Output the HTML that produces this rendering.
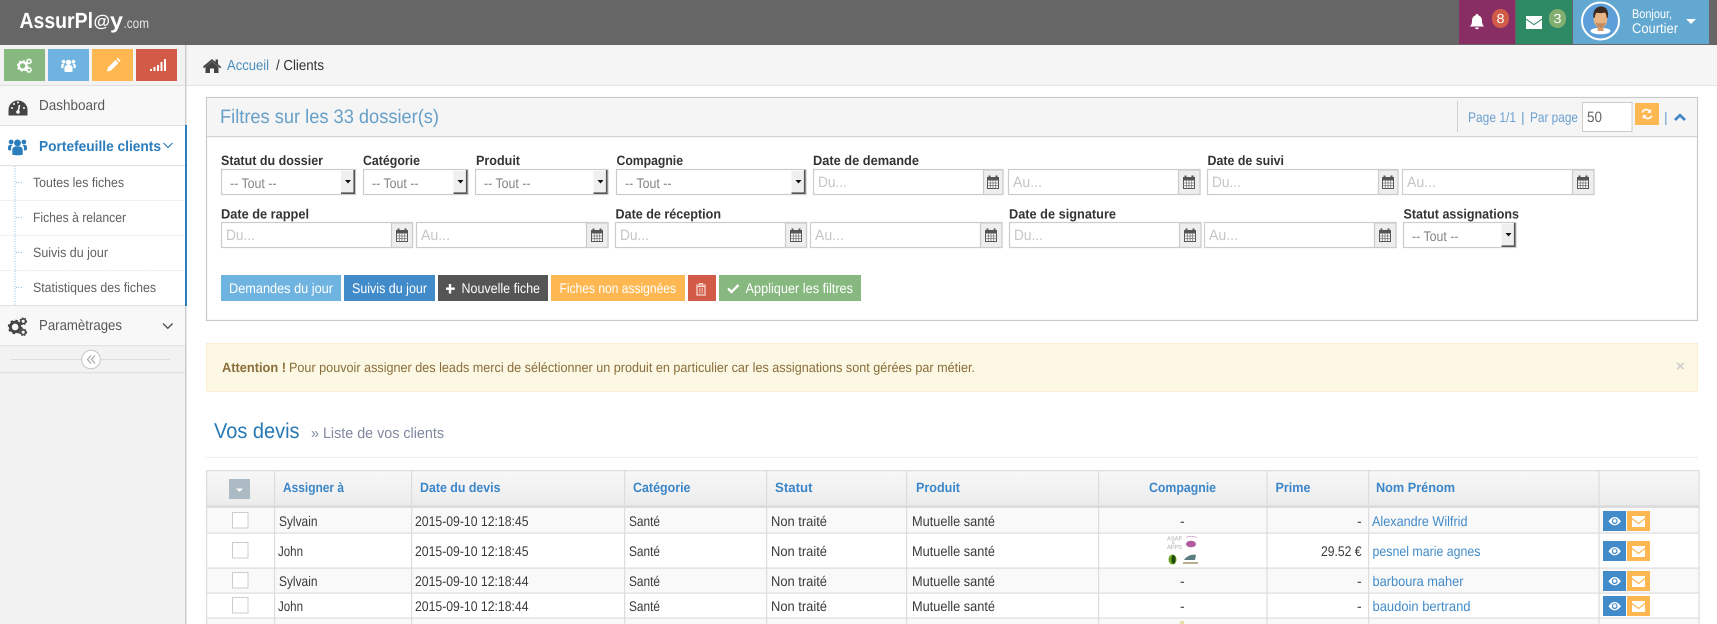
<!DOCTYPE html>
<html lang="fr">
<head>
<meta charset="utf-8">
<title>AssurPlay - Clients</title>
<style>
html,body{margin:0;padding:0;width:1717px;height:624px;overflow:hidden;background:#fff}
svg{display:block}
text{font-family:"Liberation Sans",sans-serif;font-size:14px;fill:#393939;text-rendering:geometricPrecision}
.b{font-weight:bold}
.lab{font-weight:bold;font-size:13.5px;fill:#333}
.th{font-weight:bold;font-size:13.5px;fill:#3b86c8}
.ph{font-size:15px;fill:#c6c6c6}
.sel{font-size:14px;fill:#858585}
.btn{font-size:14px;fill:#fff}
.sub{font-size:13.5px;fill:#616161}
.nav{font-size:14.5px;fill:#585858}
.a{fill:#428bca}
.pg{font-size:14px;fill:#6a9fd0}
</style>
</head>
<body>
<svg width="1717" height="624" viewBox="0 0 1717 624" xmlns="http://www.w3.org/2000/svg">
<defs>
<linearGradient id="thg" x1="0" y1="0" x2="0" y2="1"><stop offset="0" stop-color="#f8f8f8"/><stop offset="1" stop-color="#ececec"/></linearGradient>
<symbol id="cal" viewBox="0 0 12 14" overflow="visible">
<path d="M0.5 2.5h11v11h-11z" fill="#fff" stroke="#555"/>
<path d="M0 2h12v3.5H0z" fill="#555"/>
<path d="M2.5 0.5v3M9.5 0.5v3" stroke="#555" stroke-width="2"/>
<path d="M0.5 8h11M0.5 10.7h11M3.3 5v8M6 5v8M8.7 5v8" stroke="#777" stroke-width=".8"/>
</symbol>
<symbol id="sa" viewBox="0 0 16 25" overflow="visible">
<path d="M1 1h13v22H1z" fill="#efefef"/>
<path d="M14.2 0v23.2H1" fill="none" stroke="#555" stroke-width="1.6"/>
<path d="M5 10h6l-3 3.5z" fill="#111"/>
</symbol>
<symbol id="eye" viewBox="0 0 23 20" overflow="visible">
<path d="M5.500 10.300C8 6.800 10 6 11.700 6s3.700.8 6.200 4.300c-2.500 3.300-4.500 4.100-6.200 4.100S8 13.600 5.500 10.300z" fill="#fff"/>
<circle cx="11.700" cy="10.200" r="2.900" fill="#428bca"/>
<circle cx="11.700" cy="10" r="1.700" fill="#fff"/>
</symbol>
<symbol id="env" viewBox="0 0 23 20" overflow="visible">
<path d="M5 5h13v11H5z" fill="#fff"/>
<path d="M5 7.500l6.500 5 6.500-5" fill="none" stroke="#ffb752" stroke-width="1.200"/>
</symbol>
<symbol id="gear" viewBox="0 0 20 20" overflow="visible">
<circle cx="7.500" cy="10.500" r="5" fill="none" stroke="currentColor" stroke-width="3"/>
<circle cx="7.500" cy="10.500" r="6.600" fill="none" stroke="currentColor" stroke-width="2.200" stroke-dasharray="2.6 2.6"/>
<circle cx="16" cy="4.500" r="2.500" fill="none" stroke="currentColor" stroke-width="1.700"/>
<circle cx="16" cy="4.500" r="3.500" fill="none" stroke="currentColor" stroke-width="1.200" stroke-dasharray="1.5 1.5"/>
<circle cx="16" cy="16" r="2.500" fill="none" stroke="currentColor" stroke-width="1.700"/>
<circle cx="16" cy="16" r="3.500" fill="none" stroke="currentColor" stroke-width="1.200" stroke-dasharray="1.5 1.5"/>
</symbol>
<symbol id="ppl" viewBox="0 0 20 19" overflow="visible">
<circle cx="10" cy="6" r="3.600" fill="currentColor"/>
<circle cx="3.300" cy="5" r="2.500" fill="currentColor"/>
<circle cx="16.700" cy="5" r="2.500" fill="currentColor"/>
<path d="M4.500 18.500v-5c0-2.500 2-3.800 3.500-3.800h4c1.500 0 3.500 1.300 3.500 3.800v5c-3 .8-8 .8-11 0z" fill="currentColor"/>
<path d="M0 13v-2.500C0 9 1 8 2.500 8h2.300C3.500 9 3.200 10.500 3.200 12v2C1.800 13.900 .7 13.500 0 13zM20 13v-2.500C20 9 19 8 17.500 8h-2.300c1.300 1 1.600 2.500 1.600 4v2c1.400-.1 2.500-.5 3.200-1z" fill="currentColor"/>
</symbol>
</defs>

<!-- top bar -->
<rect width="1717" height="45" fill="#666"/>
<text x="19.500" y="28" class="b" style="font-size:22px;fill:#fff" textLength="73.500" lengthAdjust="spacingAndGlyphs">AssurPl</text>
<text x="93.500" y="26.500" class="b" style="font-size:16.500px;fill:#fff" textLength="16.500" lengthAdjust="spacingAndGlyphs">@</text>
<text x="110" y="28" class="b" style="font-size:22px;fill:#fff" textLength="13" lengthAdjust="spacingAndGlyphs">y</text>
<text x="123.500" y="28" style="font-size:14px;fill:#e6e6e6" textLength="25.500" lengthAdjust="spacingAndGlyphs">.com</text>

<rect x="1459" y="0" width="56" height="44" fill="#892e65"/>
<rect x="1516" y="0" width="56" height="44" fill="#2e8965"/>
<rect x="1573" y="0" width="136" height="44" fill="#62a8d1"/>
<path d="M1477 14c1 0 1.500.7 1.500 1.500 2.500.7 3.500 2.700 3.500 5.500 0 2.500.6 3.700 2 5.500h-14c1.400-1.800 2-3 2-5.500 0-2.800 1-4.800 3.500-5.500 0-.8.500-1.500 1.500-1.500z M1475 27.500h4c0 1-.9 1.700-2 1.700s-2-.7-2-1.700z" fill="#fff"/>
<rect x="1492" y="9" width="17" height="19" rx="8.500" fill="#d15b47"/>
<text x="1496.500" y="23" style="font-size:13px;fill:#fff" textLength="8" lengthAdjust="spacingAndGlyphs">8</text>
<path d="M1526 16h16v2.500l-8 5.500-8-5.500z" fill="#fff"/>
<path d="M1526 19.800l8 5.400 8-5.400V29h-16z" fill="#fff"/>
<rect x="1549" y="9" width="17" height="19" rx="8.500" fill="#82af6f"/>
<text x="1553.500" y="23" style="font-size:13px;fill:#fff" textLength="8" lengthAdjust="spacingAndGlyphs">3</text>
<!-- avatar -->
<circle cx="1600.500" cy="21" r="18.500" fill="#5d9fd8" stroke="#fff" stroke-width="2"/>
<ellipse cx="1600.500" cy="31" rx="10" ry="3.300" fill="#fff"/>
<rect x="1597.500" y="25" width="6" height="6" fill="#d99a68"/>
<ellipse cx="1600.500" cy="19" rx="6.800" ry="9" fill="#eab384"/>
<path d="M1593.500 18c-1-6.500 2-11.500 7.500-11.500 5.500 0 8 4.500 6.800 11.500l-1.300-.8c0-2.500-.6-4.200-2-4.700-2.500.8-5.500.8-8 .3-1 .8-1.500 2.500-1.500 4.400z" fill="#3b2a20"/>
<path d="M1595.500 22.500c2 1 8 1 10 0-.8 4-3 5.500-5 5.500s-4.200-1.500-5-5.500z" fill="#c08a64"/>
<text x="1632" y="18" style="font-size:12.500px;fill:#fff" textLength="40" lengthAdjust="spacingAndGlyphs">Bonjour,</text>
<text x="1632" y="33" style="font-size:14px;fill:#fff" textLength="46" lengthAdjust="spacingAndGlyphs">Courtier</text>
<path d="M1686 19h10l-5 5z" fill="#fff"/>

<!-- sidebar -->
<rect x="0" y="45" width="185" height="579" fill="#f2f2f2"/>
<rect x="185" y="45" width="1.500" height="579" fill="#ccc"/>
<rect x="4" y="49" width="41" height="32" fill="#87b87f"/>
<rect x="48" y="49" width="41" height="32" fill="#6fb3e0"/>
<rect x="92" y="49" width="41" height="32" fill="#ffb752"/>
<rect x="136" y="49" width="41" height="32" fill="#d15b47"/>
<use href="#gear" x="17" y="58" width="15" height="15" color="#fff"/>
<use href="#ppl" x="61" y="58" width="15" height="14" color="#fff"/>
<path d="M107 71.500l1-4 7.500-7.500 3 3-7.500 7.500z M116.500 59l1.200-1.200 3 3-1.200 1.200z" fill="#fff"/>
<path d="M150 69h2v2h-2zM153.500 67h2v4h-2zM157 65h2v6h-2zM160.500 62h2v9h-2zM164 59h2v12h-2z" fill="#fff"/>
<rect x="0" y="85" width="185" height="1" fill="#e0e0e0"/>

<rect x="0" y="86" width="185" height="39" fill="#f8f8f8"/>
<rect x="0" y="125" width="185" height="1.500" fill="#e3e3e3"/>
<path d="M9 115v-5a9 9 0 0 1 18 0v5z" fill="#444" stroke="#444" stroke-linejoin="round"/>
<path d="M18 112l1.500-7" stroke="#fff" stroke-width="1.500"/>
<circle cx="12" cy="108" r="1" fill="#fff"/><circle cx="14" cy="104" r="1" fill="#fff"/><circle cx="24" cy="108" r="1" fill="#fff"/><circle cx="18" cy="102.500" r="1" fill="#fff"/><circle cx="18" cy="112" r="1.800" fill="#fff"/>
<text x="39" y="110" class="nav" textLength="66" lengthAdjust="spacingAndGlyphs">Dashboard</text>

<rect x="0" y="126" width="185" height="179" fill="#fff"/>
<rect x="0" y="165" width="185" height="1.200" fill="#e3e3e3"/>
<use href="#ppl" x="8" y="137" width="19" height="18.500" color="#2b7dbc"/>
<text x="39" y="151" class="b" style="font-size:14.500px;fill:#2b7dbc" textLength="122" lengthAdjust="spacingAndGlyphs">Portefeuille clients</text>
<path d="M163.500 143l4.500 4.500 4.500-4.500" fill="none" stroke="#2b7dbc" stroke-width="1.200"/>
<rect x="185" y="125" width="2" height="181" fill="#2b7dbc"/>
<path d="M15 166v139" stroke="#8fbfe3" stroke-width="1" stroke-dasharray="1 1.5"/>
<path d="M16 182.500h7M16 217.500h7M16 252.500h7M16 287.500h7" stroke="#8fbfe3" stroke-width="1" stroke-dasharray="1 1.5"/>
<path d="M0 200.500h185M0 235.500h185M0 270.500h185" stroke="#d5dde5" stroke-width="1" stroke-dasharray="1 1.5"/>
<text x="33" y="187" class="sub" textLength="91" lengthAdjust="spacingAndGlyphs">Toutes les fiches</text>
<text x="33" y="222" class="sub" textLength="93" lengthAdjust="spacingAndGlyphs">Fiches à relancer</text>
<text x="33" y="257" class="sub" textLength="75" lengthAdjust="spacingAndGlyphs">Suivis du jour</text>
<text x="33" y="292" class="sub" textLength="123" lengthAdjust="spacingAndGlyphs">Statistiques des fiches</text>

<rect x="0" y="305" width="185" height="40" fill="#f8f8f8"/>
<rect x="0" y="305" width="185" height="1.200" fill="#e3e3e3"/>
<rect x="0" y="345" width="185" height="1.200" fill="#e3e3e3"/>
<use href="#gear" x="8" y="317" width="19" height="19" color="#444"/>
<text x="39" y="330" class="nav" textLength="83" lengthAdjust="spacingAndGlyphs">Paramètrages</text>
<path d="M163 323.500l4.800 4.800 4.800-4.800" fill="none" stroke="#555" stroke-width="1.400"/>
<rect x="0" y="372" width="185" height="1.200" fill="#e0e0e0"/>
<rect x="11" y="359" width="159" height="1" fill="#ddd"/>
<circle cx="91" cy="359.500" r="9.300" fill="#fff" stroke="#c4c4c4"/>
<path d="M91 355.500l-3.500 4 3.500 4M95 355.500l-3.500 4 3.500 4" fill="none" stroke="#aaa" stroke-width="1.200"/>

<!-- breadcrumb -->
<rect x="186.500" y="45" width="1530.500" height="40" fill="#f5f5f5"/>
<rect x="186.500" y="85" width="1530.500" height="1" fill="#e5e5e5"/>
<path d="M203 66.500l9-7.500 3.500 3v-2.500h2.500v4.700l3.300 2.800-1 1.200-8.300-7-8 7zM205.500 67l6.500-5.500 6.500 5.500v6h-4.500v-4.500h-4v4.500h-4.500z" fill="#444"/>
<text x="227" y="70" class="a" style="font-size:14.500px;fill:#4c8fbd" textLength="42" lengthAdjust="spacingAndGlyphs">Accueil</text>
<text x="276" y="70" style="font-size:14.500px;fill:#333" textLength="48" lengthAdjust="spacingAndGlyphs">/ Clients</text>

<!-- filter box -->
<rect x="206.500" y="97.500" width="1491" height="223" fill="#fff" stroke="#c8c8c8" stroke-width="1.200"/>
<rect x="207" y="98" width="1490" height="38" fill="#f5f5f5"/>
<rect x="207" y="136" width="1490" height="1.200" fill="#d5d5d5"/>
<text x="220" y="123" style="font-size:19.500px;fill:#669fc7" textLength="219" lengthAdjust="spacingAndGlyphs">Filtres sur les 33 dossier(s)</text>
<rect x="1457" y="101" width="1" height="31" fill="#d0d0d0"/>
<text x="1468" y="122" class="pg" textLength="48" lengthAdjust="spacingAndGlyphs">Page 1/1</text>
<text x="1521" y="122" class="pg">|</text>
<text x="1530" y="122" class="pg" textLength="48" lengthAdjust="spacingAndGlyphs">Par page</text>
<rect x="1582.500" y="102.500" width="49.500" height="29" fill="#fff" stroke="#ccc"/>
<text x="1587" y="122" style="font-size:15px;fill:#666" textLength="15" lengthAdjust="spacingAndGlyphs">50</text>
<rect x="1635" y="103" width="24" height="22" fill="#ffb752"/>
<path d="M1641.500 112.500c.5-2.500 2.500-3.800 4.500-3.800 1.500 0 2.800.6 3.800 1.600l1.400-1.400v4h-4l1.500-1.500c-.7-.7-1.600-1-2.700-1-1.200 0-2.400.8-2.800 2.100zM1652.500 115.500c-.5 2.500-2.500 3.800-4.500 3.800-1.500 0-2.800-.6-3.800-1.600l-1.400 1.400v-4h4l-1.500 1.500c.7.700 1.600 1 2.700 1 1.200 0 2.400-.8 2.800-2.100z" fill="#fff"/>
<text x="1664" y="122" class="pg">|</text>
<path d="M1675 120l5-4.800 5 4.800" fill="none" stroke="#3d85c6" stroke-width="2.600"/>

<!-- labels -->
<text x="221" y="165" class="lab" textLength="102" lengthAdjust="spacingAndGlyphs">Statut du dossier</text>
<text x="363" y="165" class="lab" textLength="57" lengthAdjust="spacingAndGlyphs">Catégorie</text>
<text x="476" y="165" class="lab" textLength="44" lengthAdjust="spacingAndGlyphs">Produit</text>
<text x="616.500" y="165" class="lab" textLength="66.500" lengthAdjust="spacingAndGlyphs">Compagnie</text>
<text x="813" y="165" class="lab" textLength="106" lengthAdjust="spacingAndGlyphs">Date de demande</text>
<text x="1207.500" y="165" class="lab" textLength="76.500" lengthAdjust="spacingAndGlyphs">Date de suivi</text>
<text x="221" y="218.500" class="lab" textLength="88" lengthAdjust="spacingAndGlyphs">Date de rappel</text>
<text x="615.500" y="218.500" class="lab" textLength="105.500" lengthAdjust="spacingAndGlyphs">Date de réception</text>
<text x="1009" y="218.500" class="lab" textLength="107" lengthAdjust="spacingAndGlyphs">Date de signature</text>
<text x="1403.500" y="218.500" class="lab" textLength="115.500" lengthAdjust="spacingAndGlyphs">Statut assignations</text>

<!-- selects -->
<g fill="#fff" stroke="#ccc" stroke-width="1.200">
<rect x="221.500" y="169.500" width="134" height="25"/>
<rect x="363.500" y="169.500" width="104.500" height="25"/>
<rect x="475.500" y="169.500" width="132.500" height="25"/>
<rect x="616.500" y="169.500" width="189.500" height="25"/>
<rect x="1403.500" y="222.500" width="112.500" height="25"/>
</g>
<use href="#sa" x="340" y="170" width="16" height="25"/>
<use href="#sa" x="452.500" y="170" width="16" height="25"/>
<use href="#sa" x="592.500" y="170" width="16" height="25"/>
<use href="#sa" x="790.500" y="170" width="16" height="25"/>
<use href="#sa" x="1500.500" y="223" width="16" height="25"/>
<text x="230" y="188" class="sel" textLength="46.500" lengthAdjust="spacingAndGlyphs">-- Tout --</text>
<text x="372" y="188" class="sel" textLength="46.500" lengthAdjust="spacingAndGlyphs">-- Tout --</text>
<text x="484" y="188" class="sel" textLength="46.500" lengthAdjust="spacingAndGlyphs">-- Tout --</text>
<text x="625" y="188" class="sel" textLength="46.500" lengthAdjust="spacingAndGlyphs">-- Tout --</text>
<text x="1412" y="241" class="sel" textLength="46.500" lengthAdjust="spacingAndGlyphs">-- Tout --</text>

<!-- date inputs -->
<g fill="#fff" stroke="#ccc" stroke-width="1.200">
<rect x="813.500" y="169.500" width="189.500" height="25"/>
<rect x="1008.500" y="169.500" width="191.500" height="25"/>
<rect x="1207.500" y="169.500" width="190.500" height="25"/>
<rect x="1402.500" y="169.500" width="191.500" height="25"/>
<rect x="221.500" y="222.500" width="191" height="25"/>
<rect x="416.500" y="222.500" width="191.500" height="25"/>
<rect x="615.500" y="222.500" width="191" height="25"/>
<rect x="810.500" y="222.500" width="191.500" height="25"/>
<rect x="1009.500" y="222.500" width="191.500" height="25"/>
<rect x="1204.500" y="222.500" width="191.500" height="25"/>
</g>
<g fill="#eee" stroke="#ccc" stroke-width="1.200">
<rect x="983.500" y="170" width="19.500" height="24.500"/>
<rect x="1178.500" y="170" width="21.500" height="24.500"/>
<rect x="1378.500" y="170" width="19.500" height="24.500"/>
<rect x="1572.500" y="170" width="21.500" height="24.500"/>
<rect x="391.500" y="223" width="21" height="24.500"/>
<rect x="586.500" y="223" width="21.500" height="24.500"/>
<rect x="785.500" y="223" width="21" height="24.500"/>
<rect x="980.500" y="223" width="21.500" height="24.500"/>
<rect x="1179.500" y="223" width="21.500" height="24.500"/>
<rect x="1374.500" y="223" width="21.500" height="24.500"/>
</g>
<use href="#cal" x="987" y="175" width="12" height="14"/>
<use href="#cal" x="1183" y="175" width="12" height="14"/>
<use href="#cal" x="1382" y="175" width="12" height="14"/>
<use href="#cal" x="1577" y="175" width="12" height="14"/>
<use href="#cal" x="396" y="228" width="12" height="14"/>
<use href="#cal" x="591" y="228" width="12" height="14"/>
<use href="#cal" x="790" y="228" width="12" height="14"/>
<use href="#cal" x="985" y="228" width="12" height="14"/>
<use href="#cal" x="1184" y="228" width="12" height="14"/>
<use href="#cal" x="1379" y="228" width="12" height="14"/>
<text x="818" y="187" class="ph" textLength="29" lengthAdjust="spacingAndGlyphs">Du...</text>
<text x="1013" y="187" class="ph" textLength="29" lengthAdjust="spacingAndGlyphs">Au...</text>
<text x="1212" y="187" class="ph" textLength="29" lengthAdjust="spacingAndGlyphs">Du...</text>
<text x="1407" y="187" class="ph" textLength="29" lengthAdjust="spacingAndGlyphs">Au...</text>
<text x="226" y="240" class="ph" textLength="29" lengthAdjust="spacingAndGlyphs">Du...</text>
<text x="421" y="240" class="ph" textLength="29" lengthAdjust="spacingAndGlyphs">Au...</text>
<text x="620" y="240" class="ph" textLength="29" lengthAdjust="spacingAndGlyphs">Du...</text>
<text x="815" y="240" class="ph" textLength="29" lengthAdjust="spacingAndGlyphs">Au...</text>
<text x="1014" y="240" class="ph" textLength="29" lengthAdjust="spacingAndGlyphs">Du...</text>
<text x="1209" y="240" class="ph" textLength="29" lengthAdjust="spacingAndGlyphs">Au...</text>

<!-- buttons -->
<rect x="221" y="275" width="120" height="26" fill="#6fb3e0"/>
<rect x="344" y="275" width="91" height="26" fill="#428bca"/>
<rect x="438" y="275" width="110" height="26" fill="#555"/>
<rect x="551" y="275" width="134" height="26" fill="#ffb752"/>
<rect x="688" y="275" width="28" height="26" fill="#d15b47"/>
<rect x="719" y="275" width="142" height="26" fill="#87b87f"/>
<text x="229" y="293" class="btn" textLength="104" lengthAdjust="spacingAndGlyphs">Demandes du jour</text>
<text x="352" y="293" class="btn" textLength="75" lengthAdjust="spacingAndGlyphs">Suivis du jour</text>
<path d="M450 284v9.500M446 288.700h8.800" stroke="#fff" stroke-width="2.400"/>
<text x="461.500" y="293" class="btn" textLength="78.500" lengthAdjust="spacingAndGlyphs">Nouvelle fiche</text>
<text x="559.500" y="293" class="btn" textLength="116.500" lengthAdjust="spacingAndGlyphs">Fiches non assignées</text>
<path d="M696 285h10M699.500 285v-1.500h3V285" fill="none" stroke="#f6d5cf" stroke-width="1.100"/>
<path d="M697 286.500h8v8.500h-8z" fill="none" stroke="#f6d5cf" stroke-width="1.300"/>
<path d="M699.500 288v5.500M701 288v5.500M702.500 288v5.500" stroke="#f6d5cf" stroke-width=".6"/>
<path d="M728 288.500l3.500 3.500 7-7" fill="none" stroke="#fff" stroke-width="2.300"/>
<text x="745.500" y="293" class="btn" textLength="107.500" lengthAdjust="spacingAndGlyphs">Appliquer les filtres</text>

<!-- alert -->
<rect x="206.500" y="343.500" width="1491" height="48" fill="#fcf8e3" stroke="#fbeed5"/>
<text x="222" y="372" class="b" style="font-size:13.500px;fill:#8a6d3b" textLength="64" lengthAdjust="spacingAndGlyphs">Attention !</text>
<text x="289" y="372" style="font-size:13.500px;fill:#8a6d3b" textLength="686" lengthAdjust="spacingAndGlyphs">Pour pouvoir assigner des leads merci de séléctionner un produit en particulier car les assignations sont gérées par métier.</text>
<text x="1676" y="371" class="b" style="font-size:15px;fill:#d0d0d0">×</text>

<!-- page header -->
<text x="214" y="438" style="font-size:21.500px;fill:#2679b5" textLength="85.500" lengthAdjust="spacingAndGlyphs">Vos devis</text>
<text x="311" y="438" style="font-size:15px;fill:#8089a0" textLength="133" lengthAdjust="spacingAndGlyphs">» Liste de vos clients</text>
<path d="M206 457.500h1492" stroke="#dcdcdc" stroke-dasharray="1 1"/>

<!-- table -->
<rect x="206" y="470" width="1493" height="35" fill="url(#thg)"/>
<rect x="206" y="505" width="1493" height="3" fill="#ddd"/>
<rect x="207" y="508" width="1492" height="25" fill="#f9f9f9"/>
<rect x="207" y="533" width="1492" height="35" fill="#fff"/>
<rect x="207" y="568" width="1492" height="25" fill="#f9f9f9"/>
<rect x="207" y="593" width="1492" height="25" fill="#fff"/>
<rect x="207" y="618" width="1492" height="6" fill="#f9f9f9"/>
<rect x="206" y="470" width="1493" height="1.200" fill="#ddd"/>
<g fill="#ddd">
<rect x="206" y="532.500" width="1493" height="1.200"/>
<rect x="206" y="567.500" width="1493" height="1.200"/>
<rect x="206" y="592.500" width="1493" height="1.200"/>
<rect x="206" y="617.500" width="1493" height="1.200"/>
<rect x="206" y="470" width="1.200" height="154"/>
<rect x="274" y="470" width="1.200" height="154"/>
<rect x="411" y="470" width="1.200" height="154"/>
<rect x="624" y="470" width="1.200" height="154"/>
<rect x="766" y="470" width="1.200" height="154"/>
<rect x="906" y="470" width="1.200" height="154"/>
<rect x="1098" y="470" width="1.200" height="154"/>
<rect x="1266.500" y="470" width="1.200" height="154"/>
<rect x="1368" y="470" width="1.200" height="154"/>
<rect x="1598.500" y="470" width="1.200" height="154"/>
<rect x="1698.500" y="470" width="1.200" height="154"/>
</g>
<rect x="229" y="479" width="21" height="20" fill="#abbac3"/>
<path d="M236 488.500h7l-3.500 3.500z" fill="#fff"/>
<text x="283" y="492" class="th" textLength="61" lengthAdjust="spacingAndGlyphs">Assigner à</text>
<text x="420" y="492" class="th" textLength="80.500" lengthAdjust="spacingAndGlyphs">Date du devis</text>
<text x="633" y="492" class="th" textLength="57.500" lengthAdjust="spacingAndGlyphs">Catégorie</text>
<text x="775" y="492" class="th" textLength="37.500" lengthAdjust="spacingAndGlyphs">Statut</text>
<text x="916" y="492" class="th" textLength="44" lengthAdjust="spacingAndGlyphs">Produit</text>
<text x="1149" y="492" class="th" textLength="67" lengthAdjust="spacingAndGlyphs">Compagnie</text>
<text x="1275.500" y="492" class="th" textLength="35" lengthAdjust="spacingAndGlyphs">Prime</text>
<text x="1376" y="492" class="th" textLength="79" lengthAdjust="spacingAndGlyphs">Nom Prénom</text>

<!-- checkboxes -->
<g fill="#fff" stroke="#ccc">
<rect x="232.500" y="512.500" width="15.500" height="15.500"/>
<rect x="232.500" y="542.500" width="15.500" height="15.500"/>
<rect x="232.500" y="572.500" width="15.500" height="15.500"/>
<rect x="232.500" y="597.500" width="15.500" height="15.500"/>
</g>

<!-- row 1 -->
<text x="279" y="526" textLength="38.500" lengthAdjust="spacingAndGlyphs">Sylvain</text>
<text x="415" y="526" textLength="113.500" lengthAdjust="spacingAndGlyphs">2015-09-10 12:18:45</text>
<text x="629" y="526" textLength="31" lengthAdjust="spacingAndGlyphs">Santé</text>
<text x="771" y="526" textLength="56" lengthAdjust="spacingAndGlyphs">Non traité</text>
<text x="912" y="526" textLength="83" lengthAdjust="spacingAndGlyphs">Mutuelle santé</text>
<text x="1180" y="526">-</text>
<text x="1357" y="526">-</text>
<text x="1372" y="526" class="a" textLength="95.500" lengthAdjust="spacingAndGlyphs">Alexandre Wilfrid</text>
<!-- row 2 -->
<text x="278" y="556" textLength="25" lengthAdjust="spacingAndGlyphs">John</text>
<text x="415" y="556" textLength="113.500" lengthAdjust="spacingAndGlyphs">2015-09-10 12:18:45</text>
<text x="629" y="556" textLength="31" lengthAdjust="spacingAndGlyphs">Santé</text>
<text x="771" y="556" textLength="56" lengthAdjust="spacingAndGlyphs">Non traité</text>
<text x="912" y="556" textLength="83" lengthAdjust="spacingAndGlyphs">Mutuelle santé</text>
<text x="1321" y="556" textLength="40.500" lengthAdjust="spacingAndGlyphs">29.52 €</text>
<text x="1372.500" y="556" class="a" textLength="108" lengthAdjust="spacingAndGlyphs">pesnel marie agnes</text>
<!-- company logos -->
<text x="1167" y="540.500" style="font-size:6px;fill:#aaa" textLength="15" lengthAdjust="spacingAndGlyphs">ASAF</text>
<text x="1172" y="544" style="font-size:4px;fill:#aaa">&amp;</text>
<text x="1167" y="549" style="font-size:6px;fill:#aaa" textLength="15" lengthAdjust="spacingAndGlyphs">AFPS</text>
<path d="M1186 537.500c3-1.500 7-1.500 11 0" fill="none" stroke="#d8a8cf" stroke-width=".8"/>
<ellipse cx="1191" cy="544" rx="5" ry="3.300" fill="#b05aa0"/>
<ellipse cx="1172.500" cy="559.500" rx="4" ry="5" fill="#6aa51e"/>
<ellipse cx="1173.500" cy="559.500" rx="2" ry="4.500" fill="#1f4a12"/>
<path d="M1184 560c3-5 10-6 12-5l-1 5z" fill="#5d7d80"/>
<path d="M1183 562h15v2h-15z" fill="#b8ad8e"/>
<!-- row 3 -->
<text x="279" y="586" textLength="38.500" lengthAdjust="spacingAndGlyphs">Sylvain</text>
<text x="415" y="586" textLength="113.500" lengthAdjust="spacingAndGlyphs">2015-09-10 12:18:44</text>
<text x="629" y="586" textLength="31" lengthAdjust="spacingAndGlyphs">Santé</text>
<text x="771" y="586" textLength="56" lengthAdjust="spacingAndGlyphs">Non traité</text>
<text x="912" y="586" textLength="83" lengthAdjust="spacingAndGlyphs">Mutuelle santé</text>
<text x="1180" y="586">-</text>
<text x="1357" y="586">-</text>
<text x="1372.500" y="586" class="a" textLength="91" lengthAdjust="spacingAndGlyphs">barboura maher</text>
<!-- row 4 -->
<text x="278" y="611" textLength="25" lengthAdjust="spacingAndGlyphs">John</text>
<text x="415" y="611" textLength="113.500" lengthAdjust="spacingAndGlyphs">2015-09-10 12:18:44</text>
<text x="629" y="611" textLength="31" lengthAdjust="spacingAndGlyphs">Santé</text>
<text x="771" y="611" textLength="56" lengthAdjust="spacingAndGlyphs">Non traité</text>
<text x="912" y="611" textLength="83" lengthAdjust="spacingAndGlyphs">Mutuelle santé</text>
<text x="1180" y="611">-</text>
<text x="1357" y="611">-</text>
<text x="1372.500" y="611" class="a" textLength="98" lengthAdjust="spacingAndGlyphs">baudoin bertrand</text>
<rect x="1180" y="621" width="4" height="3" fill="#e6dfa0"/>

<!-- action buttons -->
<g fill="#428bca">
<rect x="1603" y="511" width="23" height="20"/>
<rect x="1603" y="541" width="23" height="20"/>
<rect x="1603" y="571" width="23" height="20"/>
<rect x="1603" y="596" width="23" height="20"/>
</g>
<g fill="#ffb752">
<rect x="1627" y="511" width="23" height="20"/>
<rect x="1627" y="541" width="23" height="20"/>
<rect x="1627" y="571" width="23" height="20"/>
<rect x="1627" y="596" width="23" height="20"/>
</g>
<use href="#eye" x="1603" y="511" width="23" height="20"/>
<use href="#eye" x="1603" y="541" width="23" height="20"/>
<use href="#eye" x="1603" y="571" width="23" height="20"/>
<use href="#eye" x="1603" y="596" width="23" height="20"/>
<use href="#env" x="1627" y="511" width="23" height="20"/>
<use href="#env" x="1627" y="541" width="23" height="20"/>
<use href="#env" x="1627" y="571" width="23" height="20"/>
<use href="#env" x="1627" y="596" width="23" height="20"/>
</svg>
</body>
</html>
